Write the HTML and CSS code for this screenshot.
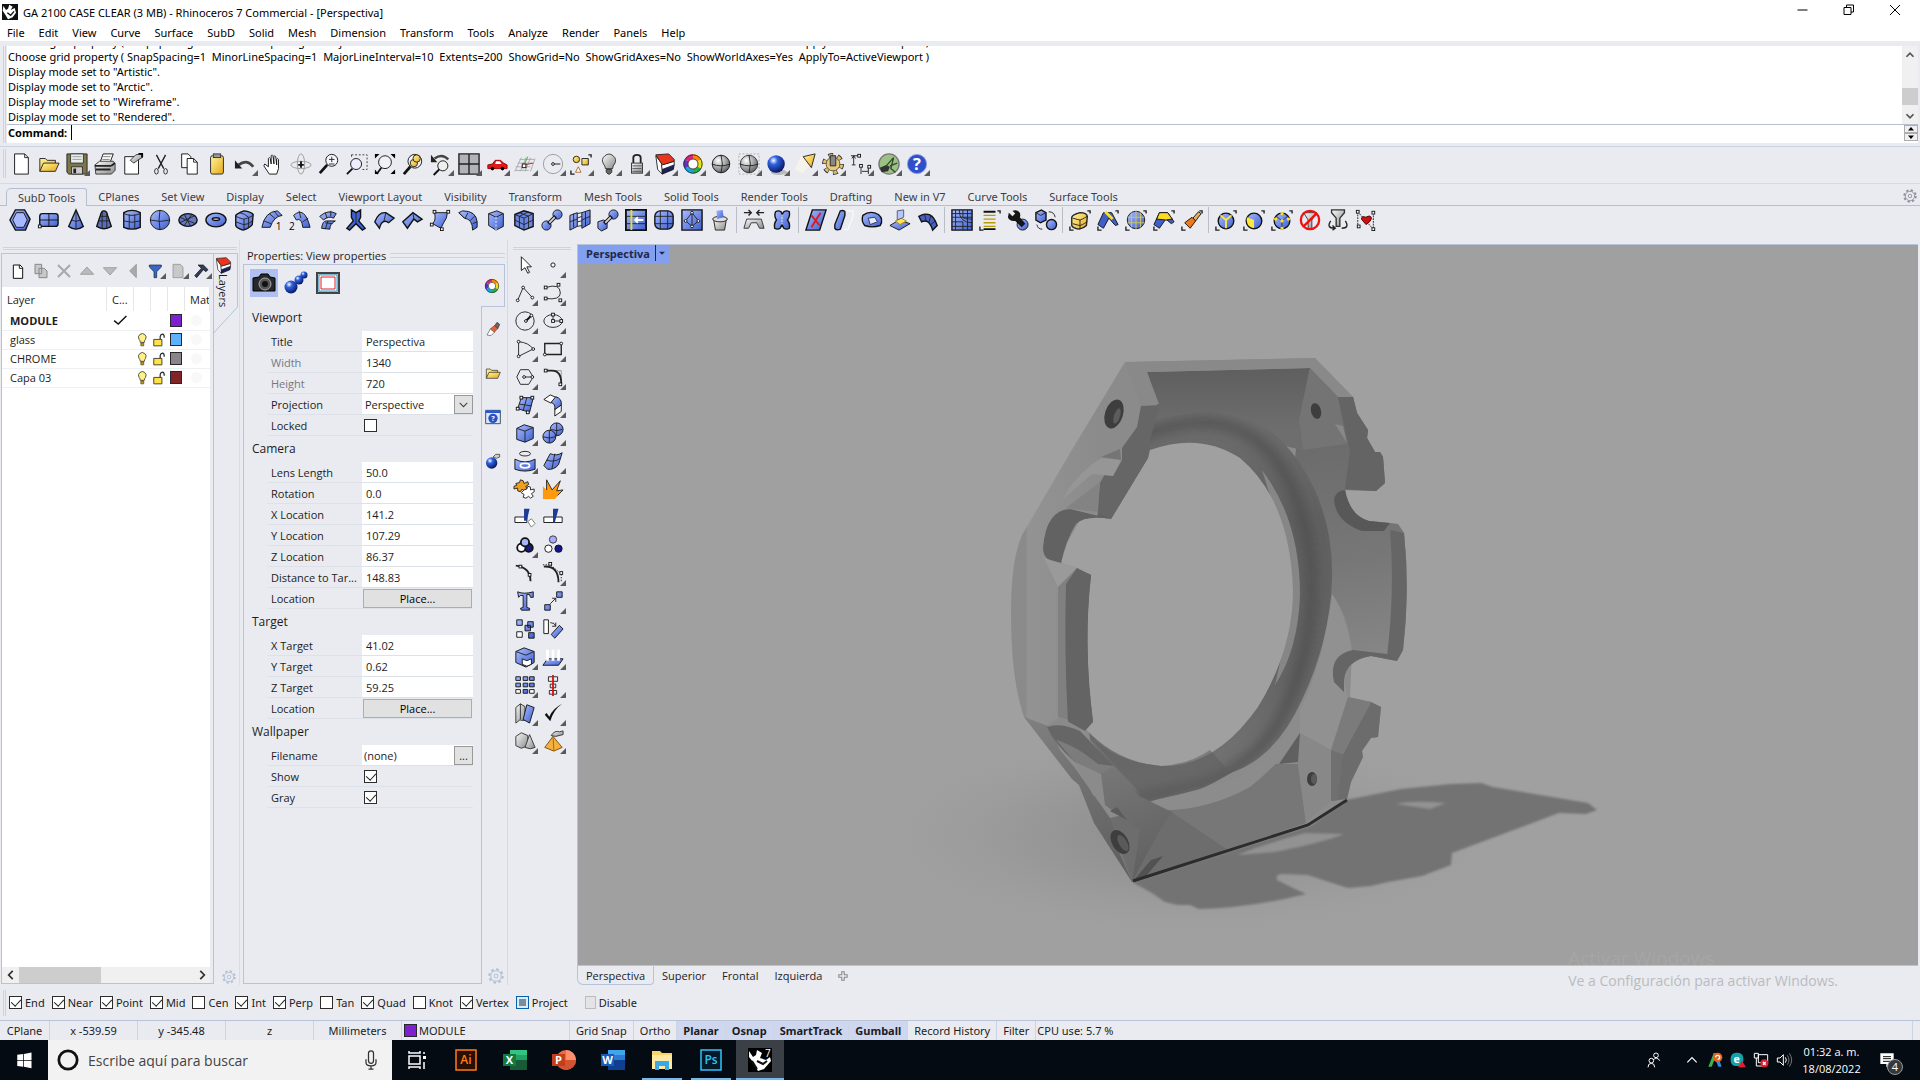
FILE: index.html
```html
<!DOCTYPE html>
<html lang="es">
<head>
    <meta charset="UTF-8">
    <meta name="viewport" content="width=device-width, initial-scale=1.0">
    <title>GA 2100 CASE CLEAR (3 MB) - Rhinoceros 7 Commercial - [Perspectiva]</title>
    <link rel="stylesheet" href="styles.css">
</head>
<body>

<!-- Shared gradients for the icons -->
<svg class="defs" width="0" height="0" aria-hidden="true">
    <defs>
        <linearGradient id="blue" x1="0" y1="0" x2="1" y2="1"><stop offset="0" stop-color="#a9bcff"/><stop offset="1" stop-color="#3d5fd0"/></linearGradient>
        <linearGradient id="grey" x1="0" y1="0" x2="1" y2="1"><stop offset="0" stop-color="#fafafa"/><stop offset="1" stop-color="#8a8a8a"/></linearGradient>
        <linearGradient id="gold" x1="0" y1="0" x2="1" y2="1"><stop offset="0" stop-color="#fff6a0"/><stop offset="1" stop-color="#e8a818"/></linearGradient>
        <radialGradient id="ball" cx=".35" cy=".3" r=".8"><stop offset="0" stop-color="#fff"/><stop offset=".3" stop-color="#2f62e0"/><stop offset="1" stop-color="#020a50"/></radialGradient>
        <radialGradient id="greyball" cx=".35" cy=".3" r=".8"><stop offset="0" stop-color="#fff"/><stop offset="1" stop-color="#555"/></radialGradient>
    </defs>
</svg>

<header class="titlebar">
    <span class="app-icon" data-icon="rhino"></span>
    <span class="title">GA 2100 CASE CLEAR (3 MB) - Rhinoceros 7 Commercial - [Perspectiva]</span>
    <button aria-label="Minimize" data-icon="min"></button>
    <button aria-label="Restore" data-icon="restore"></button>
    <button aria-label="Close" data-icon="close"></button>
</header>

<nav class="menubar">
    <button>File</button><button>Edit</button><button>View</button><button>Curve</button><button>Surface</button><button>SubD</button><button>Solid</button><button>Mesh</button><button>Dimension</button><button>Transform</button><button>Tools</button><button>Analyze</button><button>Render</button><button>Panels</button><button>Help</button>
</nav>

<!-- Command history and prompt -->
<section class="command-area">
    <div class="grip"></div>
    <div class="command-main">
        <div class="history">
            <div class="history-text">
                <p>Choose grid property ( SnapSpacing=1  MinorLineSpacing=1  MajorLineInterval=10  Extents=200  ShowGrid=No  ShowGridAxes=No  ShowWorldAxes=Yes  ApplyTo=ActiveViewport )</p>
                <p>Choose grid property ( SnapSpacing=1  MinorLineSpacing=1  MajorLineInterval=10  Extents=200  ShowGrid=No  ShowGridAxes=No  ShowWorldAxes=Yes  ApplyTo=ActiveViewport )</p>
                <p>Display mode set to "Artistic".</p>
                <p>Display mode set to "Arctic".</p>
                <p>Display mode set to "Wireframe".</p>
                <p>Display mode set to "Rendered".</p>
            </div>
            <div class="vscroll">
                <button aria-label="Scroll up" data-icon="up"></button>
                <div class="vtrack"><div class="vthumb"></div></div>
                <button aria-label="Scroll down" data-icon="down"></button>
            </div>
        </div>
        <div class="prompt">
            <label for="command">Command:</label>
            <span class="caret"></span>
            <input type="text" id="command">
            <div class="spinner">
                <button aria-label="Previous" data-icon="spinup"></button>
                <button aria-label="Next" data-icon="spindown"></button>
            </div>
        </div>
    </div>
</section>

<section class="standard-bar">
    <div class="grip"></div>
    <div class="toolbar" data-tools="new open save* print docprops cut copy paste undo* pan rotate zoom zoomwin zoomext zoomsel undoview* fourview* car* cplane* osnap* select* bulb* lock* layers* wheel* sphere ghost* shiny* spot* gear* dims* grasshopper* help*"></div>
</section>

<nav class="tool-tabs">
    <button class="active">SubD Tools</button><button>CPlanes</button><button>Set View</button><button>Display</button><button>Select</button><button>Viewport Layout</button><button>Visibility</button><button>Transform</button><button>Mesh Tools</button><button>Solid Tools</button><button>Render Tools</button><button>Drafting</button><button>New in V7</button><button>Curve Tools</button><button>Surface Tools</button>
    <button class="tab-options" aria-label="Options" data-icon="cog"></button>
</nav>

<section class="subd-bar">
    <div class="toolbar" data-tools="hexa plane cone cone2 cylinder ball3 ell torus cubeball loft1 loft2 sweep multi bend1 bend2 quad pipe extrude cube3 append stitch bridge insert grid crease trash | sym1 fill | xplane slide face extr offset | mesh list wrench swap | selball seledge selsphere selface brush | vert1 vert2 vert3 nofilter filter heart"></div>
</section>

<main class="workspace">

    <!-- Layers panel -->
    <section class="layers">
        <div class="panel-grip"></div>
        <div class="layers-row">
            <div class="layers-box">
                <div class="toolbar small" data-tools="lnew lcopy ldel ltriup ltridown ltrileft lfilter* ldoc* lhammer*"></div>
                <div class="layers-list">
                    <table>
                        <colgroup><col><col class="c-current"><col class="c-icon"><col class="c-icon"><col class="c-icon"><col class="c-mat"></colgroup>
                        <thead>
                            <tr><th>Layer</th><th>C...</th><th></th><th></th><th></th><th>Mat</th></tr>
                        </thead>
                        <tbody>
                            <tr class="current"><td>MODULE</td><td><span data-icon="tick"></span></td><td></td><td></td><td><span class="swatch purple"></span></td><td><span class="dot"></span></td></tr>
                            <tr><td>glass</td><td></td><td><span data-icon="lamp"></span></td><td><span data-icon="unlock"></span></td><td><span class="swatch sky"></span></td><td><span class="dot"></span></td></tr>
                            <tr><td>CHROME</td><td></td><td><span data-icon="lamp"></span></td><td><span data-icon="unlock"></span></td><td><span class="swatch gray"></span></td><td><span class="dot"></span></td></tr>
                            <tr><td>Capa 03</td><td></td><td><span data-icon="lamp"></span></td><td><span data-icon="unlock"></span></td><td><span class="swatch maroon"></span></td><td><span class="dot"></span></td></tr>
                        </tbody>
                    </table>
                    <div class="hscroll">
                        <button aria-label="Scroll left" data-icon="left"></button>
                        <div class="htrack"><div class="hthumb"></div></div>
                        <button aria-label="Scroll right" data-icon="right"></button>
                    </div>
                </div>
            </div>
            <div class="layers-side">
                <button class="side-tab">
                    <svg class="tab-shape" viewBox="0 0 24 80"><path d="M0 .5H23.5V54L.5 79V80"/></svg>
                    <span data-icon="layers"></span><span class="vertical">Layers</span>
                </button>
                <button class="panel-gear" aria-label="Panel options" data-icon="cog"></button>
            </div>
        </div>
    </section>

    <!-- Properties panel -->
    <section class="properties">
        <h2>Properties: View properties</h2>
        <div class="prop-row">
            <div class="prop-box">
                <div class="prop-modes">
                    <button class="active" aria-label="Camera" data-icon="camera"></button>
                    <button aria-label="Rendering" data-icon="balls"></button>
                    <button aria-label="Safe frame" data-icon="frame"></button>
                </div>
                <fieldset>
                    <legend>Viewport</legend>
                    <div class="field"><label for="vtitle">Title</label><input type="text" id="vtitle" value="Perspectiva"></div>
                    <div class="field dim"><label for="vwidth">Width</label><input type="text" id="vwidth" value="1340"></div>
                    <div class="field dim"><label for="vheight">Height</label><input type="text" id="vheight" value="720"></div>
                    <div class="field"><label for="proj">Projection</label><div class="combo"><select id="proj"><option>Perspective</option></select><span data-icon="chev"></span></div></div>
                    <div class="field"><label for="locked">Locked</label><input type="checkbox" id="locked"></div>
                </fieldset>
                <fieldset>
                    <legend>Camera</legend>
                    <div class="field"><label for="lens">Lens Length</label><input type="text" id="lens" value="50.0"></div>
                    <div class="field"><label for="rot">Rotation</label><input type="text" id="rot" value="0.0"></div>
                    <div class="field"><label for="xloc">X Location</label><input type="text" id="xloc" value="141.2"></div>
                    <div class="field"><label for="yloc">Y Location</label><input type="text" id="yloc" value="107.29"></div>
                    <div class="field"><label for="zloc">Z Location</label><input type="text" id="zloc" value="86.37"></div>
                    <div class="field"><label for="dist">Distance to Tar...</label><input type="text" id="dist" class="flat" value="148.83" readonly></div>
                    <div class="field"><label for="place1">Location</label><button type="button" id="place1" class="place">Place...</button></div>
                </fieldset>
                <fieldset>
                    <legend>Target</legend>
                    <div class="field"><label for="xtar">X Target</label><input type="text" id="xtar" value="41.02"></div>
                    <div class="field"><label for="ytar">Y Target</label><input type="text" id="ytar" value="0.62"></div>
                    <div class="field"><label for="ztar">Z Target</label><input type="text" id="ztar" value="59.25"></div>
                    <div class="field"><label for="place2">Location</label><button type="button" id="place2" class="place">Place...</button></div>
                </fieldset>
                <fieldset>
                    <legend>Wallpaper</legend>
                    <div class="field"><label for="wfile">Filename</label><div class="combo"><input type="text" id="wfile" value="(none)"><button type="button">...</button></div></div>
                    <div class="field"><label for="wshow">Show</label><input type="checkbox" id="wshow" checked></div>
                    <div class="field"><label for="wgray">Gray</label><input type="checkbox" id="wgray" checked></div>
                </fieldset>
            </div>
            <div class="prop-side">
                <button class="active" aria-label="Properties" data-icon="wheel"></button>
                <button aria-label="Materials" data-icon="tube"></button>
                <button aria-label="Libraries" data-icon="open"></button>
                <button aria-label="Help" data-icon="helpwin"></button>
                <button aria-label="Rendering" data-icon="bomb"></button>
                <button class="panel-gear" aria-label="Panel options" data-icon="cog"></button>
            </div>
        </div>
    </section>

    <!-- Main tool palette -->
    <section class="palette">
        <div class="panel-grip"></div>
        <div class="toolbar pair" data-tools="pointer point* polyline* curve* circle* ellipse* arc* rect* polygon* fillet* srf* srfsweep* box* spheres* revolve* patch* puzzle explode trim split union* dots crv editcrv* text move* copyobj rotateobj boolean* project* array* align* flow* check* solids* pyramid*"></div>
    </section>

    <!-- Viewport -->
    <section class="viewport-area">
        <div class="viewport">
            <svg class="scene" viewBox="578 245 1340 720" preserveAspectRatio="xMidYMid slice" role="img" aria-label="Rendered case model">
                <defs>
                    <radialGradient id="amb"><stop offset="0" stop-color="#7c7c7c"/><stop offset=".5" stop-color="#929292"/><stop offset="1" stop-color="#a0a0a0" stop-opacity="0"/></radialGradient>
                    <linearGradient id="shell" gradientUnits="userSpaceOnUse" x1="1010" y1="0" x2="1100" y2="0"><stop offset="0" stop-color="#8b8b8b"/><stop offset=".17" stop-color="#8a8a8a"/><stop offset=".2" stop-color="#939393"/><stop offset=".4" stop-color="#919191"/><stop offset="1" stop-color="#8b8b8b"/></linearGradient>
                    <linearGradient id="lower" gradientUnits="userSpaceOnUse" x1="1040" y1="710" x2="1110" y2="860"><stop offset="0" stop-color="#808080"/><stop offset="1" stop-color="#626262"/></linearGradient>
                    <linearGradient id="wall" gradientUnits="userSpaceOnUse" x1="1300" y1="430" x2="1340" y2="700"><stop offset="0" stop-color="#6a6a6a"/><stop offset=".5" stop-color="#777"/><stop offset="1" stop-color="#8c8c8c"/></linearGradient>
                    <linearGradient id="ring" gradientUnits="userSpaceOnUse" x1="1150" y1="420" x2="1180" y2="800"><stop offset="0" stop-color="#6e6e6e"/><stop offset=".3" stop-color="#606060"/><stop offset=".7" stop-color="#656565"/><stop offset="1" stop-color="#787878"/></linearGradient>
                    <linearGradient id="topwall" gradientUnits="userSpaceOnUse" x1="0" y1="370" x2="0" y2="430"><stop offset="0" stop-color="#5f5f5f"/><stop offset="1" stop-color="#6e6e6e"/></linearGradient>
                    <linearGradient id="front" gradientUnits="userSpaceOnUse" x1="1110" y1="770" x2="1150" y2="870"><stop offset="0" stop-color="#767676"/><stop offset="1" stop-color="#616161"/></linearGradient>
                    <filter id="soft" x="-30%" y="-30%" width="160%" height="160%"><feGaussianBlur stdDeviation="6"/></filter>
                    <filter id="edge"><feGaussianBlur stdDeviation="1"/></filter>
                    <clipPath id="ringclip"><path d="M1150 422Q1185 410 1225 412 1265 415 1300 463 1334 515 1332 580 1330 640 1302 700 1276 757 1233 772 1195 795 1148 808L1090 740 1080 620 1100 500Z"/></clipPath>
                </defs>
                <rect x="-1000" y="-1000" width="4000" height="4000" fill="#a0a0a0"/>
                <ellipse cx="1190" cy="835" rx="340" ry="110" fill="url(#amb)" opacity=".55"/>
                <!-- cast shadow -->
                <path filter="url(#edge)" fill="#737373" d="M1132 882L1152 893 1165 902 1178 905 1190 905 1199 909Q1250 908 1306 894L1291 887 1277 880Q1275 874 1283 874L1308 875 1329 882 1348 888 1371 886 1388 882 1422 876 1451 865 1452 853 1559 813 1586 814 1597 810 1588 803 1493 787 1481 783 1451 784 1401 789 1346 800 1310 826Z"/>
                <path filter="url(#edge)" fill="#929292" d="M1237 855Q1270 842 1305 833L1344 834Q1325 842 1275 852ZM1396 804Q1412 800 1446 803L1430 809Z"/>
                <!-- body with the round opening cut out -->
                <path fill="url(#shell)" d="M1125 362L1315 358 1353 397 1357 413 1368 430 1367 438 1375 452 1380 452 1383 457 1385 483 1376 491 1345 490Q1350 516 1369 521L1398 524 1404 533Q1410 590 1403 650L1397 661 1371 656Q1346 660 1344 680L1348 697 1371 702 1381 707 1378 737 1371 738 1362 751 1363 757 1351 782 1347 799 1310 826 1132 882 1094 823 1079 785 1072 779 1024 717Q1011 680 1011 613 1011 560 1022 535L1070 453Z"/>
                <path fill="url(#lower)" d="M1024 717L1048 726 1060 750 1075 768 1110 818 1160 830 1132 882 1094 823 1079 785 1072 779Z"/>
                <!-- far wall -->
                <path fill="url(#wall)" d="M1299 420L1310 368 1338 397 1353 397 1357 413 1368 430 1367 438 1375 452 1380 452 1383 457 1385 483 1376 491 1345 490Q1350 516 1369 521L1398 524 1404 533Q1410 590 1403 650L1397 661 1371 656Q1346 660 1344 680L1348 697 1371 702 1381 707 1378 737 1371 738 1362 751 1363 757 1351 782 1347 799 1310 826 1298 764 1270 700Z"/>
                <path fill="url(#topwall)" d="M1147 372L1310 368 1299 422 1302 450 1260 440 1148 452 1157 405Z"/>
                <path fill="#777" d="M1150 805L1230 795 1275 764 1298 764 1306 823 1132 882 1118 850Z"/>
                <path fill="#6d6d6d" d="M1110 818L1153 808 1170 811 1228 850 1132 882Z"/>
                <!-- ring -->
                <path fill="url(#ring)" d="M1150 422Q1185 410 1225 412 1265 415 1300 463 1334 515 1332 580 1330 640 1302 700 1276 757 1233 772 1195 795 1148 808L1090 740 1080 620 1100 500Z"/>
                <path fill="none" stroke="#4c4c4c" stroke-width="10" filter="url(#soft)" clip-path="url(#ringclip)" opacity=".8" d="M1130 440Q1190 415 1225 425 1270 436 1294 492 1316 550 1311 610 1306 668 1280 720 1255 765 1200 785L1130 800"/>
                <path fill="#8c8c8c" d="M1332 594Q1322 680 1290 728 1258 775 1215 785 1180 795 1146 802L1156 810Q1205 812 1250 787 1278 765 1302 733L1350 697 1352 650Q1348 615 1332 594Z"/>
                <path fill="#969696" d="M1332 594Q1322 664 1300 710V733L1331 750 1348 697 1344 680 1352 652Q1346 615 1332 594Z" opacity=".5"/>
                <path fill="#868686" d="M1262 470Q1300 520 1300 595 1298 650 1275 685L1285 640 1290 560Z"/>
                <!-- opening -->
                <path fill="#a0a0a0" d="M1150 450Q1200 432 1240 458 1290 500 1293 590 1293 650 1258 707 1215 768 1161 766 1115 762 1085 728L1093 722 1089 687Q1085 630 1091 575L1077 568 1061 563 1067 543 1080 520Q1095 515 1111 519L1148 458Z"/>
                <!-- near top left block -->
                <path fill="#898989" d="M1125 362L1315 358 1353 397 1338 397 1310 368 1147 372 1159 404 1141 406Z"/>
                <path fill="#666" d="M1141 406L1160 405 1150 440 1148 458 1111 519 1097 512 1100 483 1105 474 1113 476 1122 460 1122 448 1137 427Z"/>
                <path fill="#757575" d="M1101 457L1120 449 1121 460Z"/>
                <path fill="#969696" d="M1101 458L1121 460 1113 476 1092 474 1062 500Q1075 475 1101 458Z"/>
                <path fill="#838383" d="M1066 508L1100 482 1098 512Z"/>
                <path fill="#626262" d="M1061 563Q1043 562 1043 548 1046 510 1070 509L1111 519Q1085 515 1076 524 1066 540 1061 563Z"/>
                <path fill="#9a9a9a" d="M1044 558L1077 568 1058 587Z"/>
                <!-- left bumper -->
                <path fill="#808080" d="M1058 587L1077 568 1068 720 1058 717Z"/>
                <path fill="#646464" d="M1077 568L1091 575Q1083 640 1093 722L1085 731 1068 723Q1064 650 1066 584Z"/>
                <path fill="#8a8a8a" d="M1047 726L1060 717 1085 731 1076 731Z"/>
                <path fill="#5e5e5e" d="M1085 730Q1110 762 1161 766 1190 764 1210 750L1230 772 1190 787 1150 802 1139 792 1115 766Z" opacity=".55"/>
                <path fill="#666" d="M1047 727Q1060 722 1080 731L1114 766 1101 774 1075 762Q1055 745 1047 727Z"/>
                <path fill="#7c7c7c" d="M1056 740Q1075 745 1098 764L1114 766 1101 774 1075 762Z"/>
                <path fill="#8b8b8b" d="M1075 762L1101 774 1105 805 1093 795Z"/>
                <path fill="url(#front)" d="M1114 766L1139 796 1172 812 1160 830 1132 882 1140 830 1105 805 1101 774Z"/>
                <path fill="#5c5c5c" d="M1110 811L1117 807 1127 820Z"/>
                <path fill="#525252" d="M1151 860L1163 856 1146 876 1134 880Z"/>
                <path fill="none" stroke="#2c2c2c" stroke-width="3" d="M1133 881L1308 825 1347 800"/>
                <!-- right side cuts -->
                <path fill="#747474" d="M1310 368L1338 397 1347 444 1303 450 1299 420Z"/>
                <path fill="#646464" d="M1338 397L1353 397 1357 413 1368 430 1367 438 1375 452 1380 452 1383 457 1385 483 1376 491 1345 489 1350 450Z"/>
                <path fill="#888" d="M1335 424L1343 426 1347 443Z"/>
                <path fill="#585858" d="M1345 490Q1350 516 1369 521L1390 523 1384 531 1362 531Q1336 522 1334 500 1336 490 1345 490Z"/>
                <path fill="#666" d="M1390 530L1404 533Q1410 590 1403 650L1397 661 1387 656Q1395 590 1390 530Z"/>
                <path fill="#656565" d="M1397 661L1371 656Q1346 660 1344 680L1344 692 1334 682Q1328 655 1353 650L1387 654Z"/>
                <path fill="#6c6c6c" d="M1371 702L1381 707 1378 737 1371 738 1362 751 1363 757 1351 782 1347 799 1331 801 1343 754Z"/>
                <path fill="#7b7b7b" d="M1348 697L1371 702 1343 754 1331 750Z"/>
                <path fill="#888" d="M1300 733L1331 750 1331 801 1306 822 1298 764Z"/>
                <path fill="#707070" d="M1331 750L1343 754 1338 800 1331 801Z"/>
                <path fill="#606060" d="M1300 733L1298 762 1279 764Z"/>
                <!-- screw holes -->
                <g fill="#3e3e3e">
                    <ellipse cx="1114" cy="414" rx="9" ry="15" transform="rotate(18 1114 414)"/>
                    <ellipse cx="1316" cy="411" rx="5" ry="8" transform="rotate(-15 1316 411)"/>
                    <ellipse cx="1120" cy="842" rx="8" ry="13" transform="rotate(-30 1120 842)"/>
                    <ellipse cx="1312" cy="779" rx="5" ry="7"/>
                </g>
                <ellipse cx="1117" cy="416" rx="3" ry="8" fill="#5c5c5c" transform="rotate(18 1117 416)"/>
                <ellipse cx="1123" cy="843" rx="4" ry="9" fill="#5a5a5a" transform="rotate(-30 1123 843)"/>
                <ellipse cx="1314" cy="779" rx="3" ry="5" fill="#5a5a5a"/>
            </svg>
            <div class="view-label"><span>Perspectiva</span><button aria-label="Viewport menu" data-icon="caret"></button></div>
        </div>
        <nav class="view-tabs">
            <button class="active">Perspectiva</button><button>Superior</button><button>Frontal</button><button>Izquierda</button><button aria-label="Add" data-icon="plus"></button>
        </nav>
        <div class="watermark"><p class="big">Activar Windows</p><p>Ve a Configuración para activar Windows.</p></div>
    </section>
</main>

<section class="osnap">
    <div class="grip"></div>
    <label><input type="checkbox" checked>End</label>
    <label><input type="checkbox" checked>Near</label>
    <label><input type="checkbox" checked>Point</label>
    <label><input type="checkbox" checked>Mid</label>
    <label><input type="checkbox">Cen</label>
    <label><input type="checkbox" checked>Int</label>
    <label><input type="checkbox" checked>Perp</label>
    <label><input type="checkbox">Tan</label>
    <label><input type="checkbox" checked>Quad</label>
    <label><input type="checkbox">Knot</label>
    <label><input type="checkbox" checked>Vertex</label>
    <label class="project"><input type="checkbox" class="mixed">Project</label>
    <label class="disable"><input type="checkbox" class="off">Disable</label>
</section>

<footer class="statusbar">
    <button class="cplane">CPlane</button>
    <span class="coord">x -539.59</span>
    <span class="coord">y -345.48</span>
    <span class="coord">z</span>
    <span class="coord">Millimeters</span>
    <button class="layer"><span class="swatch purple"></span>MODULE</button>
    <button>Grid Snap</button>
    <button>Ortho</button>
    <button class="on">Planar</button>
    <button class="on">Osnap</button>
    <button class="on">SmartTrack</button>
    <button class="on">Gumball</button>
    <button>Record History</button>
    <button>Filter</button>
    <span class="cpu">CPU use: 5.7 %</span>
</footer>

<footer class="taskbar">
    <button class="start" aria-label="Inicio" data-icon="windows"></button>
    <div class="search">
        <span data-icon="cortana"></span>
        <input type="text" placeholder="Escribe aquí para buscar" aria-label="Buscar">
        <span data-icon="mic"></span>
    </div>
    <button class="app" aria-label="Vista de tareas" data-icon="taskview"></button>
    <button class="app" aria-label="Illustrator" data-icon="ai"></button>
    <button class="app" aria-label="Excel" data-icon="excel"></button>
    <button class="app" aria-label="PowerPoint" data-icon="ppt"></button>
    <button class="app" aria-label="Word" data-icon="word"></button>
    <button class="app open" aria-label="Explorador" data-icon="folder"></button>
    <button class="app open" aria-label="Photoshop" data-icon="ps"></button>
    <button class="app open focus" aria-label="Rhinoceros 7" data-icon="rhino7"></button>
    <div class="tray">
        <button class="people" aria-label="Contactos" data-icon="people"></button>
        <button aria-label="Mostrar iconos" data-icon="trayup"></button>
        <button aria-label="Autodesk" data-icon="autodesk"></button>
        <button aria-label="ESET" data-icon="eset"></button>
        <button aria-label="Red" data-icon="net"></button>
        <button aria-label="Volumen" data-icon="volume"></button>
        <div class="clock"><span>01:32 a. m.</span><span>18/08/2022</span></div>
        <button class="notify" aria-label="Notificaciones"><span data-icon="note"></span><span class="badge">4</span></button>
    </div>
</footer>

<script src="icons.js"></script>
</body>
</html>
```

FILE: styles.css
```css
* {
    box-sizing: border-box;
}
body {
    margin: 0;
    height: 100vh;
    display: flex;
    flex-direction: column;
    overflow: hidden;
    background-color: #e9ebf0;
    color: #1c1c24;
    font-family: "Open Sans", "Noto Sans", sans-serif;
    font-size: 11px;
    line-height: 15px;
}
.titlebar, .menubar, .command-area, .tool-tabs, .osnap, .statusbar {
    font-family: "Noto Sans", "Open Sans", sans-serif;
}
p, h2 {
    margin: 0;
    font-weight: normal;
}
button, input, select {
    font: inherit;
    color: inherit;
    margin: 0;
    padding: 0;
    border: none;
    border-radius: 0;
    background: none;
    outline: none;
}
button {
    display: flex;
    align-items: center;
    justify-content: center;
    flex-shrink: 0;
    white-space: nowrap;
}
svg {
    display: block;
    overflow: visible;
}
.defs {
    position: absolute;
}

/* Title and menu */
.titlebar {
    display: flex;
    align-items: center;
    height: 24px;
    padding: 0 2px;
    background-color: #fff;
    color: #000;
}
.titlebar .title {
    flex: 1;
    padding-left: 5px;
}
.app-icon svg {
    width: 16px;
    height: 16px;
}
.titlebar button {
    align-self: flex-start;
    width: 46px;
    height: 20px;
}
.titlebar button svg {
    width: 12px;
    height: 12px;
}
.menubar {
    display: flex;
    height: 17px;
    background-color: #fff;
    color: #000;
}
.menubar button {
    padding: 0 7px;
}

/* Command area */
.command-area {
    display: flex;
    height: 106px;
    padding: 5px 2px 3px 0;
    border-bottom: 1px solid #ccd3e0;
}
.grip {
    width: 3px;
    margin: 0 1px 0 3px;
    border: solid #ccd3e0;
    border-width: 0 1px;
    flex-shrink: 0;
}
.command-main {
    flex: 1;
    display: flex;
    flex-direction: column;
    background-color: #fff;
    color: #000;
}
.history {
    display: flex;
    height: 79px;
    overflow: hidden;
    border-bottom: 1px solid #b4bfcf;
}
.history-text {
    flex: 1;
    display: flex;
    flex-direction: column;
    justify-content: flex-end;
    white-space: pre;
    padding-left: 1px;
}
.vscroll {
    width: 16px;
    display: flex;
    flex-direction: column;
    background-color: #f0f0f0;
}
.vscroll button {
    height: 17px;
}
.vtrack {
    flex: 1;
    display: flex;
    flex-direction: column;
    justify-content: flex-end;
}
.vthumb {
    height: 17px;
    margin-bottom: 2px;
    background-color: #cdcdcd;
}
.prompt {
    flex: 1;
    display: flex;
    align-items: flex-start;
    padding-left: 1px;
}
.prompt label {
    font-weight: bold;
}
.caret {
    width: 1px;
    height: 15px;
    margin-left: 4px;
    background-color: #000;
}
.prompt input {
    flex: 1;
}
.spinner button {
    width: 14px;
    height: 8px;
    border: 1px solid #adadad;
    background-color: #f0f0f0;
}

/* Toolbars */
.standard-bar {
    display: flex;
    height: 37px;
    padding: 2px 0 5px 0;
    border-bottom: 1px solid #d3d9e5;
}
.toolbar {
    display: flex;
    align-items: center;
}
.tool {
    position: relative;
    width: 28px;
    height: 27px;
}
.tool svg {
    width: 22px;
    height: 22px;
}
.tool.flyout::after {
    content: "";
    position: absolute;
    right: 1px;
    bottom: 1px;
    border: solid transparent;
    border-width: 3px;
    border-right-color: #5a5a5a;
    border-bottom-color: #5a5a5a;
}
.sep {
    width: 1px;
    height: 26px;
    margin: 0 3px 0 2px;
    background-color: #b9bdc6;
}
.tool-tabs {
    display: flex;
    align-items: flex-end;
    height: 22px;
    padding: 0 3px 0 6px;
    border-bottom: 1px solid #b4c0d2;
    color: #3c3c44;
}
.tool-tabs button {
    height: 18px;
    padding: 0 11px;
}
.tool-tabs .active {
    border: 1px solid #b4c0d2;
    border-bottom: none;
    border-radius: 5px 3px 0 0;
    margin-bottom: -1px;
    background-color: #e9ebf0;
}
.tool-tabs .tab-options {
    margin-left: auto;
    padding: 0;
    color: #8b8f98;
}
.subd-bar {
    height: 34px;
    padding-left: 6px;
}

/* Workspace */
.workspace {
    flex: 1;
    min-height: 0;
    display: flex;
}
.panel-grip {
    height: 3px;
    margin: 7px 2px 3px 2px;
    border: solid #cdd4e1;
    border-width: 1px 0;
    flex-shrink: 0;
}
.layers {
    width: 240px;
    display: flex;
    flex-direction: column;
    padding: 0 0 1px 1px;
    border-right: 1px solid #d8dde7;
}
.layers-row, .prop-row {
    flex: 1;
    min-height: 0;
    display: flex;
}
.layers-box {
    width: 213px;
    display: flex;
    flex-direction: column;
    border: 1px solid #b7c3d8;
    padding-right: 3px;
}
.toolbar.small {
    height: 33px;
    padding-left: 5px;
    gap: 1px;
}
.toolbar.small .tool {
    width: 22px;
    height: 18px;
}
.toolbar.small .tool svg {
    width: 16px;
    height: 16px;
}
.layers-list {
    flex: 1;
    display: flex;
    flex-direction: column;
    justify-content: space-between;
    background-color: #fff;
}
table {
    width: 100%;
    table-layout: fixed;
    border-collapse: collapse;
}
.c-current {
    width: 27px;
}
.c-icon {
    width: 17px;
}
.c-mat {
    width: 25px;
}
th, td {
    padding: 0;
    text-align: left;
    white-space: nowrap;
    overflow: hidden;
}
th {
    height: 24px;
    padding-left: 5px;
    font-weight: normal;
    border-right: 1px solid #e6e6e6;
}
td {
    height: 19px;
    border-bottom: 1px solid #eef0f4;
}
td:first-child {
    padding-left: 8px;
}
td svg {
    width: 14px;
    height: 14px;
    margin: 0 auto;
}
.current td {
    font-weight: bold;
}
.swatch {
    display: block;
    width: 12px;
    height: 13px;
    margin: 0 auto;
    border: 1px solid #26262c;
}
.purple {
    background-color: #7d20d0;
}
.sky {
    background-color: #5cb2fc;
}
.gray {
    background-color: #8a8488;
}
.maroon {
    background-color: #802428;
}
.dot {
    display: block;
    width: 11px;
    height: 11px;
    margin-left: 6px;
    border-radius: 50%;
    background-color: #f8f8f8;
}
.hscroll {
    display: flex;
    height: 16px;
    background-color: #f0f0f0;
}
.hscroll button {
    width: 17px;
}
.htrack {
    flex: 1;
}
.hthumb {
    width: 47%;
    height: 100%;
    background-color: #cdcdcd;
}
.layers-side {
    flex: 1;
    display: flex;
    flex-direction: column;
    justify-content: space-between;
    align-items: flex-start;
}
.side-tab {
    position: relative;
    flex-direction: column;
    justify-content: flex-start;
    width: 24px;
    height: 80px;
    padding-right: 6px;
}
.side-tab svg {
    width: 17px;
    height: 17px;
    margin-top: 4px;
}
.side-tab .tab-shape {
    position: absolute;
    left: 0;
    top: 0;
    width: 24px;
    height: 80px;
    margin: 0;
    fill: none;
    stroke: #b7c3d8;
}
.vertical {
    writing-mode: vertical-rl;
}
.panel-gear {
    align-self: flex-end;
    padding-right: 3px;
    color: #b3bfd6;
}
.panel-gear svg {
    width: 14px;
    height: 14px;
}

/* Properties */
.properties {
    width: 268px;
    display: flex;
    flex-direction: column;
    padding: 6px 2px 1px 3px;
    border-right: 1px solid #d3d9e5;
}
.properties h2 {
    display: flex;
    align-items: center;
    gap: 4px;
    height: 18px;
    padding-left: 4px;
    font-size: 11px;
    white-space: nowrap;
}
.properties h2::after {
    content: "";
    flex: 1;
    height: 3px;
    border: solid #cdd4e1;
    border-width: 1px 0;
}
.prop-box {
    flex: 1;
    border: 1px solid #b7c3d8;
    border-right: none;
    padding: 4px 8px 0 6px;
}
.prop-modes {
    display: flex;
    gap: 4px;
    height: 36px;
}
.prop-modes button {
    width: 28px;
    height: 28px;
}
.prop-modes .active {
    background-color: #aebff0;
}
.prop-modes svg {
    width: 24px;
    height: 24px;
}
fieldset {
    margin: 0;
    padding: 0;
    border: none;
    min-width: 0;
}
legend {
    padding: 0 0 0 2px;
    height: 26px;
    line-height: 26px;
    font-size: 12px;
}
.field {
    display: grid;
    grid-template-columns: 95px 1fr;
    align-items: center;
    height: 21px;
    margin-left: 17px;
    border-bottom: 1px solid #dde1ea;
}
.field label {
    padding-left: 4px;
    white-space: nowrap;
}
.dim label {
    color: #77777f;
}
.field input[type="text"], .combo {
    width: 100%;
    min-width: 0;
    height: 20px;
    background-color: #fff;
}
.field input[type="text"] {
    padding-left: 4px;
}
.field .combo input[type="text"] {
    padding-left: 2px;
}
.field .flat {
    background: none;
}
.combo {
    display: flex;
    align-items: center;
    position: relative;
}
.combo select {
    flex: 1;
    height: 20px;
    padding-left: 3px;
    appearance: none;
}
.combo > span, .combo button {
    width: 19px;
    height: 19px;
    flex-shrink: 0;
    border: 1px solid #999;
    background-color: #e1e1e1;
    display: flex;
    align-items: center;
    justify-content: center;
}
.combo > span {
    position: absolute;
    right: 0;
    pointer-events: none;
}
.place {
    height: 19px;
    margin: 0 1px;
    border: 1px solid #adadad;
    background-color: #e1e1e1;
    color: #000;
}
input[type="checkbox"] {
    appearance: none;
    position: relative;
    width: 13px;
    height: 13px;
    border: 1px solid #2c2c2c;
    background-color: #fff;
}
.field input[type="checkbox"] {
    margin-left: 2px;
}
input[type="checkbox"]:checked::after {
    content: "";
    position: absolute;
    left: 3px;
    top: 0;
    width: 5px;
    height: 8px;
    border: solid #222;
    border-width: 0 1px 1px 0;
    transform: rotate(42deg);
}
.prop-side {
    width: 24px;
    display: flex;
    flex-direction: column;
    border-left: 1px solid #b7c3d8;
    gap: 28px;
}
.prop-side button {
    width: 21px;
    height: 16px;
}
.prop-side .active {
    width: 24px;
    height: 43px;
    margin: 0 0 -14px -1px;
    padding-right: 2px;
    border: 1px solid #b7c3d8;
    border-left: none;
    background-color: #e9ebf0;
}
.prop-side svg {
    width: 16px;
    height: 16px;
}
.prop-side .panel-gear {
    margin-top: auto;
    width: 18px;
    padding: 0;
}

/* Tool palette */
.palette {
    width: 69px;
    padding: 0 4px 0 3px;
}
.toolbar.pair {
    display: grid;
    grid-template-columns: 28px 28px;
    margin-top: -2px;
}
.pair .tool {
    height: 28px;
}

/* Viewport */
.viewport-area {
    flex: 1;
    position: relative;
    display: flex;
    flex-direction: column;
    padding: 4px 2px 0 0;
}
.viewport {
    flex: 1;
    min-height: 0;
    position: relative;
    border: solid #b7c3d8;
    border-width: 1px 0 1px 1px;
    background-color: #a0a0a0;
}
.scene {
    width: 100%;
    height: 100%;
    overflow: hidden;
}
.view-label {
    position: absolute;
    left: 0;
    top: 0;
    display: flex;
    height: 18px;
    line-height: 17px;
    padding: 0 3px 0 8px;
    background-color: #839ff0;
    color: #20284a;
    font-weight: bold;
}
.view-label button {
    width: 12px;
    height: 16px;
    margin-left: 5px;
    border-left: 1px solid #20284a;
}
.view-tabs {
    display: flex;
    height: 19px;
    color: #222;
}
.view-tabs button {
    height: 19px;
    padding: 0 8px;
}
.view-tabs .active {
    border: 1px solid #b7c3d8;
    border-top: none;
    border-radius: 0 0 4px 6px;
}
.watermark {
    position: absolute;
    right: 82px;
    bottom: -6px;
    color: #b9bbbf;
    font-size: 14px;
    line-height: 20px;
    pointer-events: none;
}
.watermark .big {
    font-size: 19px;
    line-height: 26px;
    color: #a6a6a6;
}

/* Osnap, status */
.osnap {
    display: flex;
    align-items: center;
    gap: 7px;
    height: 35px;
}
.osnap .grip {
    height: 26px;
    margin-right: -4px;
}
.osnap label {
    display: flex;
    align-items: center;
    gap: 3px;
}
.osnap .disable {
    margin-left: 10px;
}
.osnap .mixed {
    border-color: #0b5fa8;
    box-shadow: inset 0 0 0 2px #d8ecff;
    background-color: #7e8a94;
}
.osnap .off {
    width: 11px;
    border-color: #bcbcbc;
    background-color: #e4e4e4;
}
.statusbar {
    display: flex;
    height: 20px;
    border-top: 1px solid #b7c3d8;
    padding-right: 7px;
}
.statusbar > * {
    height: 19px;
    line-height: 19px;
    padding: 0 6px;
    text-align: center;
    border-right: 1px solid #cdd5e4;
}
.statusbar .cplane {
    width: 50px;
}
.statusbar .coord {
    width: 88px;
}
.statusbar .layer {
    width: 168px;
    padding-left: 2px;
    justify-content: flex-start;
}
.layer .swatch {
    margin: 0 2px 0 0;
    width: 13px;
}
.statusbar .on {
    background-color: #cfd7ef;
    font-weight: bold;
}
.statusbar .cpu {
    flex: 1;
    padding: 0 1px;
    text-align: left;
}

/* Windows taskbar */
.taskbar {
    display: flex;
    height: 40px;
    background-color: #050b12;
    color: #fff;
}
.start {
    width: 48px;
}
.search {
    width: 344px;
    display: flex;
    align-items: center;
    padding: 0 11px 0 9px;
    margin-right: 1px;
    gap: 9px;
    background-color: #f2f2f2;
    color: #333;
}
.search input {
    flex: 1;
    min-width: 0;
    font-size: 14px;
}
.search input::placeholder {
    color: #444;
    opacity: 1;
}
.app {
    width: 48px;
    margin-right: 1px;
}
.app svg {
    width: 24px;
    height: 24px;
}
.app.open {
    background: linear-gradient(#76b9ed, #76b9ed) center bottom / 40px 2px no-repeat;
}
.app.focus {
    background-color: #3b4047;
    background-size: 48px 2px;
}
.tray {
    display: flex;
    align-items: center;
    margin-left: auto;
    padding-right: 8px;
}
.tray button {
    width: 23px;
    height: 40px;
}
.tray .people {
    width: 28px;
    margin-right: 12px;
}
.clock {
    width: 73px;
    display: flex;
    flex-direction: column;
    text-align: center;
    line-height: 17px;
}
.tray .notify {
    position: relative;
    width: 44px;
    padding-right: 6px;
}
.badge {
    position: absolute;
    left: 19px;
    top: 19px;
    width: 16px;
    height: 16px;
    border: 1px solid #999;
    border-radius: 50%;
    background-color: #35383d;
    line-height: 14px;
}
```

FILE: icons.js
```js
// Small set of colours used in all the drawings
const K = 'stroke="#111"';
const N = 'fill="none" stroke="#222"';
const B = 'fill="url(#blue)" stroke="#111"';
const G = 'fill="url(#grey)" stroke="#333"';
const Y = 'fill="url(#gold)" stroke="#222"';
const W = 'fill="#fff" stroke="#111"';

// Little square control point
const h = (x, y) => `<rect x="${x - 1.5}" y="${y - 1.5}" width="3" height="3" ${W}/>`;
const o = (x, y) => `<circle cx="${x}" cy="${y}" r="1.5" ${W}/>`;
const corners = `<path d="M20 2h3v3M1 19v4h4" ${N} stroke-width="1.5"/>`;
const tile = (name, fill, color) => `<rect x="2" y="2" width="20" height="20" fill="${fill}" stroke="${color}" stroke-width="1.5"/><text x="12" y="16" font-size="12" font-weight="600" fill="${color}" text-anchor="middle">${name}</text>`;
const office = (letter, dark, a, b, c, round) => (round
    ? `<circle cx="14" cy="12" r="10" fill="${a}"/><path d="M14 2a10 10 0 0 1 10 10H14Z" fill="${b}"/><path d="M4 12h20a10 10 0 0 1-20 0Z" fill="${c}"/>`
    : `<path d="M7 2h17v5H7Z" fill="${a}"/><path d="M7 7h17v5H7Z" fill="${b}"/><path d="M7 12h17v10H7Z" fill="${c}"/>`) +
    `<rect y="6" width="13" height="12" fill="${dark}"/><text x="6.5" y="16" font-size="11" font-weight="bold" fill="#fff" text-anchor="middle">${letter}</text>`;

const icons = {
    rhino: '<path d="M0 0h24v24H0Z" fill="#111"/><path d="M2 3l4 6 3-2 2-6 5 3-3 5 6-3 2 7-5 7-7 3-4-7-4-6Z" fill="#fff"/><path d="M8 13l5 4 5-6" fill="none" stroke="#111" stroke-width="2"/>',
    rhino7: '<path d="M0 0h24v24H0Z" fill="#000"/><path d="M1 3l4 6 3-2 1-5 5 3-2 5 6 2 4-3 1 4-7 8-6 2-5-9-4-5Z" fill="#fff"/><path d="M9 13l6 3 4-3M4 13l5 8" fill="none" stroke="#111" stroke-width="2"/><text x="17" y="9" font-size="10" fill="#fff">7</text>',
    min: '<path d="M1 12h20" stroke="#000" stroke-width="2"/>',
    restore: '<path d="M2 7h14v14H2ZM7 7V2h14v14h-5" fill="none" stroke="#000" stroke-width="2"/>',
    close: '<path d="M2 2l20 20M22 2L2 22" stroke="#000" stroke-width="2"/>',
    // standard toolbar
    new: `<path d="M5 1h11l4 4v18H5Z" ${W}/><path d="M16 1v4h4" ${N}/>`,
    open: `<path d="M2 20V6h6l2 2h9v4" ${Y}/><path d="M2 20L6 11h17l-4 9Z" ${Y}/>`,
    save: '<path d="M1 1h22v22H3l-2-2Z" fill="#7d7646" stroke="#222"/><path d="M5 1h14v10H5Z" fill="#e8ecec" stroke="#333"/><path d="M7 4h10M7 7h10" stroke="#999"/><path d="M6 15h12v8H6Z" fill="#ccc" stroke="#333"/><path d="M8 17h3v5H8Z" fill="#222"/>',
    print: `<path d="M7 9l3-8h11l-3 8" ${W}/><path d="M10 4h8M9 7h8" stroke="#777"/><path d="M1 13l5-4h15l2 3v7l-4 4H2Z" ${G}/><path d="M1 14h18M2 18h16M19 14l4-3" ${N} stroke-width="2"/>`,
    docprops: `<path d="M3 4h12l3 3v16H3Z" ${W}/><path d="M9 8l6-6 7-1v4l-5 3-4 3Z" ${G}/><path d="M18 1h4v4" stroke="#000" fill="none" stroke-width="2"/>`,
    cut: `<path d="M7 2l8 15M17 2L9 17" ${N} stroke-width="1.5"/><ellipse cx="7" cy="20" rx="2" ry="3" ${N}/><ellipse cx="17" cy="20" rx="2" ry="3" ${N}/>`,
    copy: `<path d="M4 1h7l3 3v12H4Z" ${W}/><path d="M10 6h7l4 4v13H10Z" ${W}/><path d="M17 6v4h4" ${N}/>`,
    paste: `<rect x="5" y="3" width="14" height="20" rx="2" ${Y}/><rect x="8" y="1" width="8" height="4" fill="#999" stroke="#333"/>`,
    undo: '<path d="M5 13q9-7 16 2" fill="none" stroke="#444" stroke-width="3"/><path d="M1 8v9h8Z" fill="#222"/>',
    pan: `<path d="M8 23l-6-9 1-2 4 3V6q1-2 2 0l1 6V3q1-2 2 0l1 9V4q1-2 2 0l1 9V7q1-2 2 0v10l-2 6Z" ${W}/>`,
    rotate: `<ellipse cx="12" cy="13" rx="11" ry="4" fill="none" stroke="#999"/><ellipse cx="12" cy="12" rx="4" ry="11" fill="none" stroke="#999"/><path d="M9 13h6M12 9v7" ${K} stroke-width="2"/>`,
    zoom: `<circle cx="15" cy="8" r="6.5" fill="#f5f7ff" ${K}/><path d="M10 13l-8 9" ${K} stroke-width="3"/><path d="M12 7h6M15 4v6M12 12h6" ${N}/>`,
    zoomwin: `<path d="M6 2h17v16h-6M6 2v4" fill="none" stroke="#333" stroke-dasharray="2 2"/><circle cx="11" cy="12" r="6" fill="#eef" ${K}/><path d="M7 17l-6 6" ${K} stroke-width="2"/>`,
    zoomext: `<circle cx="12" cy="10" r="7" fill="#eef2f6" ${K}/><path d="M8 16l-5 7" ${K} stroke-width="2"/><path d="M1 1h5L1 6ZM23 1h-5l5 5ZM23 23h-5l5-5ZM1 23h4l-4-5Z"/>`,
    zoomsel: `<circle cx="14" cy="9" r="7.5" fill="#eef2f6" ${K}/><circle cx="13" cy="11" r="4" ${Y}/><circle cx="16" cy="6" r="4" ${Y}/><path d="M9 15l-7 8" ${K} stroke-width="3"/>`,
    undoview: `<path d="M5 6q8-6 15 1" fill="none" stroke="#444" stroke-width="2.5"/><path d="M1 2v8h7Z" fill="#222"/><circle cx="14" cy="14" r="5.5" fill="#eee" ${K}/><path d="M10 18l-6 6" ${K} stroke-width="2"/>`,
    fourview: '<path d="M1 1h22v22H1Z" fill="#b0b3b8" stroke="#222" stroke-width="1.5"/><path d="M12 1v22M1 12h22" stroke="#222" stroke-width="1.5"/>',
    car: '<path d="M2 13l5-1 3-4h6l3 3 4 2v4H2Z" fill="#e01818" stroke="#900"/><path d="M11 9h4l2 3h-7Z" fill="#fff"/><circle cx="7" cy="17" r="2"/><circle cx="18" cy="17" r="2"/>',
    cplane: '<path d="M6 7h16M4 11h16M2 15h16M1 19h15M8 5L1 20M13 5L7 20M18 5l-6 15M23 6l-5 14" fill="none" stroke="#aaa"/><path d="M11 13l10-2" stroke="#b22"/><path d="M11 13l4-9" stroke="#3a3"/><rect x="9" y="12" width="4" height="4" fill="#fff" stroke="#111"/>',
    osnap: `<circle cx="12" cy="12" r="10.5" fill="none" stroke="#999"/><path d="M12 12h8" ${K}/>${o(12, 12)}`,
    select: `<circle cx="7" cy="7" r="3.5" ${Y}/><path d="M13 6h7v7h-7Z" ${Y}/><path d="M9 15l3 6H6Z" fill="#fff" stroke="#a63"/>${corners}`,
    bulb: `<path d="M8 17q0-3-2-5a7 7 0 1 1 12 0q-2 2-2 5Z" ${G}/><path d="M9 18h6v3l-2 2h-2l-2-2Z" fill="#666" stroke="#333"/>`,
    lock: `<path d="M8 11V5q0-3 4-3t4 3v6" ${N} stroke-width="2"/><rect x="6" y="11" width="12" height="11" ${G}/><path d="M7 14h10M7 17h10M7 20h10" stroke="#555"/>`,
    layers: '<path d="M2 3l7 9v11l-5-5Z" fill="#fff" stroke="#222"/><path d="M9 17l13-4-1 5-12 5Z" fill="#1a2060" stroke="#111"/><path d="M8 13l14-4v4L9 18Z" fill="#fff" stroke="#222"/><path d="M2 2l14-1 6 6v2L9 13Z" fill="#e8351c" stroke="#222"/>',
    wheel: '<g fill="none" stroke-width="5"><path d="M12 4a8 8 0 0 1 7 4" stroke="#f80"/><path d="M19 8a8 8 0 0 1 0 8" stroke="#e8e020"/><path d="M19 16a8 8 0 0 1-7 4" stroke="#20b040"/><path d="M12 20a8 8 0 0 1-7-4" stroke="#10a8e0"/><path d="M5 16a8 8 0 0 1 0-8" stroke="#6030d0"/><path d="M5 8a8 8 0 0 1 7-4" stroke="#e0207a"/></g><circle cx="12" cy="12" r="10" fill="none" stroke="#333"/><circle cx="12" cy="12" r="5.5" fill="#fff" stroke="#333"/>',
    sphere: '<circle cx="12" cy="12" r="9.5" fill="url(#greyball)" stroke="#111"/><path d="M2 12q10 4 20 0M12 2q3 10 0 20" fill="none" stroke="#222"/>',
    ghost: '<path d="M1 1h22v22H1Z" fill="none" stroke="#aaa" stroke-dasharray="2 2"/><circle cx="12" cy="12" r="9.5" fill="url(#greyball)" stroke="#333"/><path d="M2 12q10 4 20 0M12 2q3 10 0 20" fill="none" stroke="#222"/>',
    shiny: '<ellipse cx="14" cy="21" rx="9" ry="3" fill="#bbb"/><circle cx="11" cy="12" r="9.500" fill="url(#ball)"/>',
    spot: `<path d="M8 2L1 18l8 4 8-8Z" fill="#f6f3ea"/><path d="M10 4l13-3-4 15Z" ${Y}/>`,
    gear: '<circle cx="12" cy="12" r="9" fill="none" stroke="#333" stroke-width="6" stroke-dasharray="4.7 4.7"/><circle cx="12" cy="12" r="9" fill="none" stroke="#e0c070" stroke-width="4" stroke-dasharray="3.5 5.9" stroke-dashoffset="-.6"/><circle cx="12" cy="12" r="7.5" fill="#e8c978" stroke="#554"/><path d="M9 3h6v11H9Z" fill="#888" stroke="#222"/>',
    dims: `<path d="M4 3v10M1 3h8M2 13h4M2 6l2-3 2 3M12 15v8M20 15v8M13 20h7" ${N}/>${h(10, 3)}${h(12, 14)}${h(21, 15)}`,
    grasshopper: '<circle cx="12" cy="12" r="11" fill="#9cc184" stroke="#777" stroke-width="1.5"/><path d="M2 16l7-3 4 2-2 5-7 1Z" fill="#333"/><path d="M9 14l8-9-3 12 5 4M13 14l8-3" fill="none" stroke="#344a2c" stroke-width="1.5"/>',
    help: '<circle cx="12" cy="12" r="10.5" fill="#3050c8" stroke="#8ea0e8"/><text x="12" y="18" font-size="18" font-weight="bold" fill="#fff" text-anchor="middle">?</text>',
    // subd toolbar
    hexa: `<path d="M7 1h10l6 10-5 12H7L1 12Z" ${B} stroke-width="1.5"/><path d="M8 4h8l4 8-4 8H8l-4-8Z" fill="#a8b8ff" ${K}/>`,
    plane: `<rect x="3" y="5" width="20" height="14" rx="3" ${B} stroke-width="1.5"/><path d="M13 5v14M3 12h20" ${K}/>${h(3, 19)}`,
    cone: `<path d="M12 1l8 18q-8 6-16 0Z" ${B} stroke-width="1.5"/><path d="M12 1v21M7 12q5 3 10 0" ${N}/>`,
    cone2: `<path d="M12 2q3 0 4 5l4 12q-8 5-16 0L8 7q1-5 4-5Z" fill="#5a6eb8" ${K} stroke-width="1.5"/><path d="M10 2v20M15 3v18M6 13h12M8 8h8" ${N}/>`,
    cylinder: `<path d="M3 4q9-5 18 0v16q-9 4-18 0Z" ${B} stroke-width="1.5"/><path d="M3 5q9 4 18 0M9 6v16M15 6v16M3 13q9 3 18 0" ${N}/>`,
    ball3: `<circle cx="12" cy="12" r="10.5" ${B}/><path d="M1 12q11 3 22 0M12 1q-2 11 0 22" ${N}/>`,
    ell: `<ellipse cx="12" cy="12" rx="10" ry="7" fill="#6478c4" ${K} stroke-width="1.5"/><path d="M3 9l17 7M3 15l17-8M8 6l7 13M16 6L8 18" ${N}/>`,
    torus: `<ellipse cx="12" cy="12" rx="11" ry="7.5" ${B} stroke-width="1.5"/><ellipse cx="12" cy="11" rx="4" ry="1.5" fill="#e9ebf0" ${K} stroke-width="1.5"/>`,
    cubeball: `<path d="M3 7q1-2 9-5 8 1 10 4l-1 11q-3 4-10 6-7-2-8-5Z" ${B} stroke-width="1.5"/><path d="M3 8q7 3 9 3t10-4M12 11v12M7 4q6 1 10 5v12M3 14q8 3 9 3 5 0 9-4" ${N}/>`,
    loft1: `<path d="M1 20Q4 3 18 2l5 5Q14 8 10 20Z" ${B}/><path d="M3 13l8 3M9 5l6 5M14 2l5 6" ${N}/><text x="16" y="23" font-size="11">1</text>`,
    loft2: `<path d="M5 7q12-11 18 13h-8Q14 9 8 12Z" ${B}/><path d="M11 2l2 8M21 10l-6 4" ${N}/><text x="0" y="23" font-size="11">2</text>`,
    sweep: `<path d="M3 8q9-8 18-3l-3 5q-5-3-11 2ZM5 21q1-8 5-8h10q-6 3-6 9Z" ${B}/><path d="M9 4l2 6M15 2v6M9 15l8 1M12 13l-3 9" ${N}/>`,
    multi: `<path d="M7 1l5 3 5-3v8l-2 4 7 8-3 2-7-7-7 7-3-2 7-8-2-4Z" fill="#3f62d0" ${K} stroke-width="1.5"/><path d="M12 4v12" ${N}/>`,
    bend1: `<path d="M2 14Q6 3 14 4l9 6-6 5q-7-5-10 6Z" ${B} stroke-width="1.5"/><path d="M14 4l-2 9" ${N}/>`,
    bend2: `<path d="M2 14L13 4l10 7-5 3-4-3-7 10Z" ${B} stroke-width="1.5"/><path d="M13 4l1 7" ${N}/>`,
    quad: `<path d="M6 4h14q0 6-4 11l-3 6-9-5q4-4 2-12Z" ${B}/>${h(6, 3)}${h(21, 3)}${h(3, 17)}${h(14, 22)}`,
    pipe: `<path d="M2 4l4-2q15 0 16 12v6l-5 3q0-12-9-13Z" ${B}/><path d="M2 4l6 6M12 4l-3 6M19 8l-5 5M22 14l-5 2" ${N}/>`,
    extrude: `<path d="M4 5l9-3 7 3v14l-8 4-8-5Z" ${B}/><path d="M4 5l8 4 8-4" ${N}/><path d="M12 9v14" stroke="#fff" stroke-dasharray="2 2"/>`,
    cube3: `<path d="M2 6l10-4 10 3v14l-10 4-10-5Z" fill="#6a86e4" ${K} stroke-width="1.5"/><path d="M2 6l10 4 10-5M12 10v13M7 4l10 4v13M17 3L7 8v13M2 12l10 5 10-5" ${N}/>`,
    append: `<circle cx="18" cy="6" r="5" ${B}/><circle cx="6" cy="18" r="5" ${B}/><path d="M8 16l8-8" ${K} stroke-width="4"/><path d="M9 15l6-6" stroke="#ccd" stroke-width="2"/>`,
    stitch: `<path d="M1 7l8-3v15l-8 4ZM14 4l9-3v15l-9 5Z" ${B}/><path d="M9 5l5-1M9 10l5-2M9 14l5-1M9 19l5-1M5 5v15M1 14l8-3M18 3v16M14 12l9-4" ${N}/>`,
    bridge: `<circle cx="18" cy="6" r="5" ${B}/><path d="M1 14l6-2 4 2v7l-6 3-4-3Z" ${B}/><path d="M8 16l8-8" ${K} stroke-width="4"/><path d="M9 15l6-6" stroke="#ccd" stroke-width="2"/>`,
    insert: `<path d="M1 1h22v22H1Z" ${B} stroke-width="2"/><path d="M1 8h22M1 16h22" ${N}/><path d="M7 1v22" stroke="#e8e020" stroke-width="2"/><path d="M20 12h-8M14 9l-3 3 3 3" fill="none" stroke="#fff" stroke-width="2"/>`,
    grid: `<rect x="2" y="2" width="20" height="20" rx="6" ${B} stroke-width="1.5"/><path d="M8 2v20M16 2v20M2 8h20M2 16h20" ${N}/>`,
    crease: `<path d="M1 1h22v22H1Z" ${B} stroke-width="1.5"/><path d="M12 4l7 9-7 6-7-6ZM12 4v15" ${N}/>${o(12, 4)}${o(5, 13)}${o(19, 13)}${o(12, 19)}`,
    trash: `<path d="M5 11h14l-2 12H7Z" fill="url(#grey)" stroke="#222"/><ellipse cx="12" cy="11" rx="8" ry="3" fill="#ddd" stroke="#222"/><path d="M8 2l7-1 1 8-7 2Z" fill="url(#blue)"/>`,
    sym1: `<path d="M1 4h8M6 1l3 3-3 3M23 4h-8M18 1l-3 3 3 3" ${N} stroke-width="1.5"/><path d="M4 11h16l3 10h-5l-3-6H9l-3 6H1Z" ${G}/>`,
    fill: `<path d="M5 3q3-2 6 0l1 3 2-3q3-2 6 0 1 5-2 9 3 4 2 9-3 2-6 0l-2-4-2 4q-3 2-6 0-1-5 2-9-3-4-1-9Z" ${B} stroke-width="1.5"/><path d="M12 6v12" stroke="#fff" stroke-dasharray="2 1"/>`,
    xplane: `<path d="M8 1h15l-7 22H1Z" ${B} stroke-width="1.5"/><path d="M17 4L7 20M7 7l9 11" stroke="#e01818" stroke-width="2"/>`,
    slide: `<path d="M15 2h7v6l-6 15-4-1" fill="none" stroke="#fff"/><path d="M8 2q4-1 5 1v4L8 22q-4 2-6-1v-4Z" ${B} stroke-width="1.5"/>`,
    face: `<path d="M2 7q8-6 17-1 6 5 2 12-9 3-17 0Q0 13 2 7Z" ${B} stroke-width="1.5"/><path d="M8 10l7-1 3 5-8 3Z" fill="#e4eaff" stroke="#334"/>`,
    extr: `<path d="M1 18l10-6 12 4-12 7Z" ${B}/><path d="M7 13l6-3 6 3-7 4Z" fill="#ffe35c" stroke="#a80"/><path d="M9 2l7-1v8l-7 3Z" fill="#b4c6ff" stroke="#556"/>`,
    offset: `<path d="M2 8q14-8 20 10l-5 5q-4-13-12-9Z" fill="#4a60c0" ${K} stroke-width="1.5"/><path d="M8 5l2 8M15 7l-2 8M20 13l-5 4" ${N}/>`,
    mesh: `<path d="M1 1h22v22H1Z" ${B} stroke-width="1.5"/><path d="M5 1v22M9 1q0 14 14 14M13 1v8q1 2 10 2M18 1v22M1 5h22M1 9h22M1 14h12v9M1 19h22" ${N}/>`,
    list: `<path d="M5 3h13M5 22h13" ${K} stroke-width="2"/><path d="M5 7h13M5 11h13M5 15h13M5 19h13" stroke="#b90" stroke-width="1.5"/>${corners}`,
    wrench: `<ellipse cx="17" cy="17" rx="6" ry="6" ${B}/><path d="M2 4l4 4 3-3-3-3q5-2 8 2 1 3 0 5l6 7-4 4-7-7q-6 1-8-4Z" fill="#161616"/>`,
    swap: `<path d="M1 4l6-3 5 3v8l-6 3-5-3Z" ${B} stroke-width="1.5"/><circle cx="18" cy="17" r="5.5" ${B} stroke-width="1.5"/><path d="M15 3q6 0 7 6M8 22q-5 0-6-5M1 4l5 3 6-3" ${N}/>`,
    selball: `<path d="M3 9q1-3 9-5 7 0 8 4l-1 10q-3 3-8 4-7-1-8-4Z" ${Y} stroke-width="1.5"/><path d="M4 10q7 2 8 2t8-4M12 12v10M4 16q7 2 8 2t8-4" ${N}/>${corners}`,
    seledge: `<path d="M1 17L7 4h9l7 13-3 1-7-8-6 11Z" fill="#3f5fc8" ${K}/><path d="M9 3l8 8" stroke="#ffe020" stroke-width="3"/>${corners}`,
    selsphere: `<circle cx="12" cy="12" r="9.5" ${B}/><path d="M3 9h18M3 15h18M12 2v20M7 4v16M17 4v16" stroke="#d8c850"/>${corners}`,
    selface: `<path d="M1 17L7 4h9l7 10-3 2-6-5-7 10Z" fill="#3f5fc8" ${K}/><path d="M7 4h9l5 7-7 1-10-1Z" fill="#ffd820" ${K}/>${corners}`,
    brush: `<path d="M13 10l6-7 3 2-6 8Z" fill="#e0b060" ${K}/><path d="M4 15l8-6 4 4-6 8Z" fill="#f07818" ${K}/>${corners}`,
    vert1: `<circle cx="12" cy="13" r="8.5" ${B} stroke-width="1.5"/><path d="M12 21v-9L6 7M12 12l6-5" fill="none" stroke="#ffe83a" stroke-width="2"/>${corners}`,
    vert2: `<circle cx="12" cy="13" r="8.5" ${B} stroke-width="1.5"/><path d="M4 9l8 3v9q-9-2-8-12Z" fill="#ffe83a"/>${corners}`,
    vert3: `<circle cx="12" cy="13" r="8.5" ${B} stroke-width="1.5"/><path d="M12 13L6 8M12 13l6-5M12 13v7" stroke="#333"/><path d="M12 5h.1M5 11h.1M19 11h.1M12 13h.1M12 21h.1" stroke="#ffe020" stroke-width="3.500" stroke-linecap="round"/>${corners}`,
    nofilter: `<path d="M5 4h14l-5 8v10h-4V12Z" ${G}/><circle cx="12" cy="12" r="10" fill="none" stroke="#f01010" stroke-width="2.5"/><path d="M19 5L5 19" stroke="#f01010" stroke-width="2.5"/>`,
    filter: `<path d="M5 1h14v3l-5 6v9h-4v-9L5 4Z" ${G} stroke-width="1.5"/><path d="M4 13q-5 8 4 8M20 13q5 8-4 8M6 18l3 3-3 2" ${N} stroke-width="1.5"/>`,
    heart: `<path d="M3 3v15M3 3l16 18M20 4v17" fill="none" stroke="#222" stroke-dasharray="2 1"/><path d="M12 17l-5-6q0-4 5-2 5-3 6 1 0 3-6 7Z" fill="#d01010" stroke="#400"/>${h(3, 3)}${h(20, 4)}${h(4, 19)}${h(20, 22)}`,
    // layer panel
    lnew: `<path d="M5 3h10l4 4v16H5Z" ${W} stroke-width="1.5"/><path d="M14 3v5h5" ${N} stroke-width="1.5"/>`,
    lcopy: '<path d="M3 2h10v14H3ZM9 8h8l4 4v10H9Z" fill="#c8c8c8" stroke="#888" stroke-width="1.5"/>',
    ldel: '<path d="M3 3l18 18M21 3L3 21" stroke="#a8a8a8" stroke-width="3"/>',
    ltriup: '<path d="M12 6l10 11H2Z" fill="#bbb" stroke="#888"/>',
    ltridown: '<path d="M12 18l10-11H2Z" fill="#bbb" stroke="#888"/>',
    ltrileft: '<path d="M7 12l10-10v20Z" fill="#aaa" stroke="#888"/>',
    lfilter: '<path d="M2 3h18v3l-7 7v9H9v-9L2 6Z" fill="#3c66c4" stroke="#123"/>',
    ldoc: '<path d="M3 2h11l4 4v16H3Z" fill="#c8c8c8" stroke="#888"/>',
    lhammer: '<path d="M6 3h8l7 7-3 3-4-3L4 22l-3-3L11 8Z" fill="#333c58" stroke="#111"/>',
    tick: '<path d="M2 13l7 6L23 5" fill="none" stroke="#111" stroke-width="2.5"/>',
    lamp: '<path d="M9 16q0-3-2-5a6.5 6.5 0 1 1 11 0q-2 2-2 5Z" fill="#fff08a" stroke="#443" stroke-width="1.5"/><path d="M10 17h5v5h-5Z" fill="#c90" stroke="#333"/>',
    unlock: '<path d="M14 11V6q1-4 4-4 3 0 3 6" fill="none" stroke="#222" stroke-width="2"/><path d="M3 11h14v11H3Z" fill="#ffe14a" stroke="#332" stroke-width="1.5"/>',
    // property panel
    camera: '<path d="M1 7l6-1 2-3h7l2 3 5 1v13H1Z" fill="#26282c" stroke="#000"/><circle cx="13" cy="13" r="6" fill="#555" stroke="#aaa"/><circle cx="13" cy="13" r="3" fill="#111"/>',
    balls: '<circle cx="20" cy="4" r="3.5" fill="url(#ball)"/><circle cx="15" cy="9" r="4.5" fill="url(#ball)"/><circle cx="7" cy="16" r="6.5" fill="url(#ball)"/>',
    frame: '<path d="M1 2h22v20H1Z" fill="#bfc3c8" stroke="#444" stroke-width="2"/><path d="M3 4h18v16H3Z" fill="#fff" stroke="#30a8e0"/><path d="M5 6h14v12H5Z" fill="#fff" stroke="#e02020"/>',
    tube: '<path d="M14 8l4-6 4 3-3 7Z" fill="#666" stroke="#333"/><path d="M8 12l6-5 5 4-5 6Z" fill="#e86030" stroke="#733"/><path d="M3 21l5-9 6 5-5 5Z" fill="#fff" stroke="#555"/>',
    helpwin: '<path d="M1 2h22v20H1Z" fill="#dfe6fa" stroke="#456" stroke-width="1.5"/><path d="M1 2h22v4H1Z" fill="#2a5ad0"/><circle cx="12" cy="14" r="7" fill="#2a50c8"/><text x="12" y="18" font-size="11" font-weight="bold" fill="#fff" text-anchor="middle">?</text>',
    bomb: '<circle cx="10" cy="15" r="8.5" fill="url(#ball)"/><path d="M12 6l4-4h6v4l-5 2Z" fill="#ccc" stroke="#222"/>',
    // palette
    pointer: `<path d="M8 3v15l4-3 3 6 2-1-3-6h5Z" ${W}/>`,
    point: `<circle cx="12" cy="12" r="2.3" ${W}/>`,
    polyline: `<path d="M4 20L10 6l10 11" ${N}/>${o(4, 20)}${o(10, 6)}${o(20, 17)}`,
    curve: `<path d="M4 6q16-5 16 6 0 8-16 6" ${N}/>${h(4, 6)}${h(18, 3)}${h(4, 18)}${h(20, 20)}`,
    circle: `<circle cx="12" cy="12" r="10" ${N}/><path d="M13 12l6-6" ${K} stroke-width="2"/>${o(13, 12)}${o(19, 6)}`,
    ellipse: `<ellipse cx="12" cy="12" rx="10" ry="7" ${N}/><path d="M12 5v7h9" ${N}/>${h(12, 5)}${h(12, 12)}${h(21, 12)}`,
    arc: `<path d="M5 20V4q11 1 16 8Z" ${N}/>${o(5, 4)}${o(5, 20)}${o(21, 12)}`,
    rect: `<path d="M3 6h18v12H3Z" ${N} stroke-width="1.5"/>${o(21, 6)}${o(3, 18)}`,
    polygon: `<path d="M7 4h9l5 8-5 8H7l-4-8Z" ${N}/><path d="M12 12h7" ${N}/>${o(11, 12)}${o(20, 12)}`,
    fillet: `<path d="M4 5h17v14" fill="none" stroke="#999"/><path d="M4 5h7q10 0 10 14" ${N} stroke-width="2"/>${h(4, 5)}${h(20, 20)}`,
    srf: `<path d="M8 4h13l-4 16-13-4Z" ${B}/><path d="M14 4l-4 14M6 11l13 2" ${N}/>${h(8, 4)}${h(20, 4)}${h(4, 16)}${h(15, 20)}`,
    srfsweep: `<path d="M2 6l7-5 7 3-6 6ZM14 16l7-4v7l-7 5Z" ${W}/><path d="M10 9l5-6q7 2 6 9l-7 5q1-6-4-8Z" ${B}/>`,
    box: `<path d="M3 7l8-4 10 3v12l-9 4-9-3Z" ${B}/><path d="M3 7l9 3 9-4M12 10v12" ${N}/>`,
    spheres: `<circle cx="16" cy="8" r="7" ${B}/><circle cx="8" cy="16" r="7" ${B}/><path d="M1 16q7 3 14 0M8 9v14M10 8q6 3 12 0M16 1v14" ${N}/>`,
    revolve: `<ellipse cx="12" cy="4" rx="6" ry="2.5" ${N}/><path d="M1 10q11 6 22 0v11q-11 4-22 0Z" ${B}/><ellipse cx="12" cy="17" rx="5" ry="2.5" fill="#5a78e0" stroke="#fff" stroke-width="2"/>`,
    patch: `<path d="M2 17L9 4q7 3 13-1l-4 13q-5 6-12 5Z" ${B}/><path d="M5 11q8 3 15-2M14 4l-3 16" ${N}/>`,
    puzzle: '<path d="M2 6l4-1 1-3 3 1 1 3 4-2 1 3-3 2 1 3-3 2-2-2-2 3-3-1v-3l-4 1v-3l3-1Z" fill="#f0a020" stroke="#222"/><path d="M11 13l3-1 1-3 3 1v3l4-1v3l-3 2 2 3-3 2-2-2-3 2-3-1 1-3-3-2Z" fill="#fff" stroke="#222"/>',
    explode: '<path d="M1 23V9l4 4V2l6 11 9-10-4 11 7-1-9 10Z" fill="#ff9a10"/><path d="M5 13V2l6 11 9-10-4 11 7-1-6 6" fill="none" stroke="#222"/>',
    trim: `<path d="M1 12h13v6H1Z" ${W}/><path d="M15 17l4-3 4 5-4 4Z" fill="#fff" stroke="#777"/><path d="M11 3h6l-3 13h-3Z" fill="#1c3a96"/>`,
    split: `<path d="M2 12h20v6H2Z" ${W}/><path d="M12 3h6l-4 15h-2Z" fill="#1c3a96"/>`,
    union: `<circle cx="16" cy="15" r="4.5" fill="#1a1a80" ${K} stroke-width="2"/><circle cx="8" cy="15" r="4.5" ${W} stroke-width="2"/><circle cx="12" cy="9" r="4.5" fill="#a9b4ff" ${K} stroke-width="2"/>`,
    dots: `<circle cx="12" cy="6" r="4" fill="#a9a9ff" stroke="#333"/><circle cx="7" cy="16" r="4" ${W}/><circle cx="18" cy="16" r="4" fill="#14148a" stroke="#111"/>`,
    crv: `<path d="M2 4q16 2 16 17" ${N} stroke-width="2"/>${h(7, 5)}${h(17, 14)}`,
    editcrv: `<path d="M2 5q16-1 16 17" ${N} stroke-width="2"/><path d="M1 3h8l12 10v8" fill="none" stroke="#222" stroke-dasharray="1.5 1.5"/>${h(9, 2)}${h(21, 12)}`,
    text: `<path d="M4 2q7 3 17 0v6h-3l-1-3h-3v14l3 1v2H8l-1-2 3-1V6H7L5 8Z" ${B}/>`,
    move: `<path d="M3 16h6v6H3ZM16 2h6v6h-6Z" ${B}/><path d="M9 15l6-6M11 9h4v4" ${N}/>`,
    copyobj: `<path d="M3 2h6v6H3ZM15 4h6v6h-6ZM12 8h6v6h-6ZM16 16h6v6h-6Z" ${B}/><path d="M3 15h6v6H3Z" ${W}/>`,
    rotateobj: `<path d="M2 2h5v15H2Z" ${W}/><path d="M9 5q5 0 6 4M15 5v4h-4" ${N}/><path d="M10 18l9-10 4 4-9 10Z" ${B}/>`,
    boolean: `<path d="M2 6l9-4 11 4v12l-9 5-11-5Z" ${B}/><path d="M2 6l11 4 9-4" ${N}/><path d="M9 14l5 2 5-2v6l-5 2-5-2Z" ${W}/>`,
    project: `<path d="M6 14h17l-5 7H1Z" ${B}/><path d="M6 4v12M12 4v12M18 4v12" stroke="#fff" stroke-width="3"/>`,
    array: `<path d="M2 3h5v4H2ZM10 3h5v4h-5ZM17 3h5v4h-5ZM2 10h5v4H2ZM10 10h5v4h-5ZM17 10h5v4h-5ZM10 17h5v4h-5Z" ${B}/><path d="M2 17h5v4H2ZM17 17h5v4h-5Z" ${W}/>`,
    align: `<path d="M7 3h10v5H7ZM9 11h6v4H9ZM8 18h8v4H8Z" ${N}/><path d="M12 1v23" stroke="#e01010" stroke-width="2"/>`,
    flow: `<path d="M2 6l5-4v17l-5 4ZM7 2l5 3v15H7" ${G}/><path d="M14 3l8 3-5 17-7-4Z" ${B}/>`,
    check: '<path d="M3 14l6 7q4-13 13-19Q12 7 8 16l-3-4Z" fill="#111"/>',
    solids: `<path d="M2 7l6-4 7 3v11l-7 3-6-3Z" ${G}/><path d="M17 5l6 14q-5 3-11 0Z" ${G}/>`,
    pyramid: `<path d="M12 7l10 12-9 4L3 19Z" fill="#f4b040" stroke="#7a4a00"/><path d="M12 7l1 16" stroke="#a60"/><path d="M10 6q4-6 9-4l4-1v4l-8 2Z" ${G}/>`,
    // windows taskbar
    windows: '<path d="M3 5l8-1v8H3ZM12 4l10-2v10H12ZM3 13h8v8l-8-1ZM12 13h10v10l-10-2Z" fill="#fff"/>',
    cortana: '<circle cx="12" cy="12" r="10" fill="none" stroke="#111" stroke-width="3"/>',
    mic: '<path d="M9 4q0-3 3-3t3 3v9q0 3-3 3t-3-3ZM6 11v4q0 4 6 4t6-4v-4M12 19v4M9 23h6" fill="none" stroke="#333" stroke-width="1.5"/>',
    taskview: '<path d="M4 8h11v8H4ZM4 3v2h11V3M4 21v-2h11v2M19 4v2M19 14v7" fill="none" stroke="#fff" stroke-width="1.5"/><path d="M18 8h3v3h-3Z" fill="#fff"/>',
    ai: tile('Ai', '#2a0f04', '#ff7c14'),
    ps: tile('Ps', '#04192a', '#2ec4fa'),
    excel: office('X', '#107c41', '#33c481', '#21a366', '#185c37'),
    ppt: office('P', '#c43e1c', '#ed6c47', '#ff8f6b', '#d35230', true),
    word: office('W', '#185abd', '#41a5ee', '#2b7cd3', '#103f91'),
    folder: '<path d="M2 3h8l2 2h10v16H2Z" fill="#f8d46c"/><path d="M2 7h20v14H2Z" fill="#ffe9a0"/><path d="M5 22v-9h14v9h-4v-4H9v4Z" fill="#38a8e8"/>',
    people: '<g fill="none" stroke="#fff" stroke-width="1.5"><circle cx="15" cy="5" r="3.5"/><path d="M11 12q4-6 10 1"/><circle cx="8" cy="13" r="3.5"/><path d="M3 23q0-6 5-6t5 6"/></g>',
    trayup: '<path d="M4 16l8-8 8 8" fill="none" stroke="#fff" stroke-width="2"/>',
    autodesk: '<path d="M2 22L10 2h5L7 22Z" fill="#3fb24f"/><path d="M9 2h6l7 20h-5Z" fill="#2f8de0"/><circle cx="16" cy="8" r="7" fill="#e8641c"/><path d="M13 8a3 3 0 1 1 3 3" fill="none" stroke="#fff" stroke-width="2"/>',
    eset: '<rect x="1" y="1" width="19" height="20" rx="8" fill="#18a0a8"/><text x="10" y="16" font-size="16" font-weight="bold" fill="#fff" text-anchor="middle">e</text><path d="M18 13l6 10H12Z" fill="#e02030"/>',
    net: '<path d="M8 4h14v12H8ZM2 2h6v7H2ZM5 9v12h10" fill="none" stroke="#fff" stroke-width="1.5"/><circle cx="17" cy="17" r="6" fill="#e02030"/><path d="M15 15l4 4M19 15l-4 4" stroke="#fff" stroke-width="2"/>',
    volume: '<path d="M2 9h4l5-5v16l-5-5H2Z" fill="none" stroke="#fff" stroke-width="1.5"/><path d="M14 8q3 4 0 8" fill="none" stroke="#fff" stroke-width="1.5"/><path d="M17 5q5 7 0 14M20 2q7 10 0 20" fill="none" stroke="#777" stroke-width="1.5"/>',
    note: '<path d="M2 2h20v16h-6l-5 5v-5H2Z" fill="#fff"/><path d="M6 7h12M6 10h12M6 14h12" stroke="#111" stroke-width="1.5"/>',
    // small glyphs
    cog: '<g fill="none" stroke="currentColor" stroke-width="1.5"><circle cx="12" cy="12" r="8"/><circle cx="12" cy="12" r="10" stroke-dasharray="4 3.85" stroke-width="3"/><circle cx="12" cy="12" r="3"/></g>',
    up: '<path d="M6 15l6-6 6 6" fill="none" stroke="#555" stroke-width="3"/>',
    down: '<path d="M6 9l6 6 6-6" fill="none" stroke="#555" stroke-width="3"/>',
    left: '<path d="M15 5l-7 7 7 7" fill="none" stroke="#333" stroke-width="3"/>',
    right: '<path d="M9 5l7 7-7 7" fill="none" stroke="#333" stroke-width="3"/>',
    chev: '<path d="M5 9l7 7 7-7" fill="none" stroke="#444" stroke-width="2"/>',
    spinup: '<path d="M12 8l6 7H6Z"/>',
    spindown: '<path d="M12 16l6-7H6Z"/>',
    caret: '<path d="M3 8h18l-9 9Z" fill="#20284a"/>',
    plus: '<path d="M9 2h6v7h7v6h-7v7H9v-7H2V9h7Z" fill="none" stroke="#888" stroke-width="2.5"/>'
};

// Icons that are not drawn at the usual 16px
const sizes = { caret: 8, plus: 10, up: 14, down: 14, left: 14, right: 14, chev: 13, spinup: 12, spindown: 12, cortana: 22, mic: 20, windows: 18, cog: 14, trayup: 14 };

function draw(name) {
    const size = sizes[name] || 16;
    return `<svg width="${size}" height="${size}" viewBox="0 0 24 24" aria-hidden="true">${icons[name]}</svg>`;
}

document.querySelectorAll('[data-icon]').forEach(el => {
    el.innerHTML = draw(el.dataset.icon);
});

// Build each toolbar: "|" is a separator, "*" marks a button with a flyout
document.querySelectorAll('[data-tools]').forEach(bar => {
    bar.innerHTML = bar.dataset.tools.split(' ').map(item => {
        if (item === '|') return '<span class="sep"></span>';
        const name = item.replace('*', '');
        return `<button class="tool${item.endsWith('*') ? ' flyout' : ''}" aria-label="${name}">${draw(name)}</button>`;
    }).join('');
});
```
